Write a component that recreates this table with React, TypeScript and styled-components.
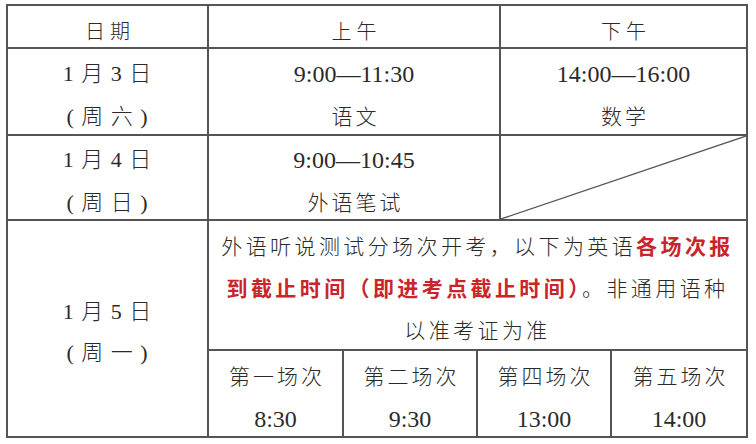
import React from "react";
import styled, { createGlobalStyle } from "styled-components";

const GlobalStyle = createGlobalStyle`
  html, body {
    margin: 0;
    padding: 0;
    background: #ffffff;
  }
`;

const Page = styled.div`
  width: 756px;
  height: 444px;
  padding: 4px 0 0 6px;
  box-sizing: border-box;
  font-family: "Liberation Serif", "Noto Sans CJK SC", serif;
  color: #2a2a2a;
`;

const Table = styled.table`
  width: 740px;
  border-collapse: collapse;
  table-layout: fixed;
  border: 2px solid #555;
`;

const Row = styled.tr<{ $h: number }>`
  height: ${(p) => p.$h}px;
`;

const Cell = styled.td<{ $diag?: boolean; $pad?: number }>`
  border: 2px solid #555;
  padding: ${(p) => p.$pad ?? 8}px 0 0 0;
  text-align: center;
  vertical-align: middle;
  position: ${(p) => (p.$diag ? "relative" : "static")};
  font-weight: 300;
`;

const Stack = styled.div<{ $gap: number }>`
  display: flex;
  flex-direction: column;
  align-items: center;
  gap: ${(p) => p.$gap}px;
`;

const HeadText = styled.div`
  font-size: 20px;
  line-height: 24px;
  letter-spacing: 5px;
  padding-left: 5px;
`;

const DateText = styled.div`
  font-size: 22px;
  line-height: 24px;
  letter-spacing: 1px;
  white-space: pre;
`;

const Time = styled.div`
  font-size: 24px;
  line-height: 24px;
  font-weight: 400;
`;

const Subject = styled.div`
  font-size: 21px;
  line-height: 24px;
  letter-spacing: 3px;
  padding-left: 3px;
`;

const NoticeLine = styled.div`
  font-size: 21px;
  line-height: 24px;
  letter-spacing: 3.4px;
  white-space: nowrap;
`;

const Red = styled.span`
  color: #c9252b;
  font-weight: 700;
`;

const Diagonal = styled.svg`
  position: absolute;
  inset: 0;
  width: 100%;
  height: 100%;
`;

const sessions = [
  { name: "第一场次", time: "8:30", span: 1 },
  { name: "第二场次", time: "9:30", span: 1 },
  { name: "第四场次", time: "13:00", span: 2 },
  { name: "第五场次", time: "14:00", span: 1 },
];

export default function App() {
  return (
    <>
      <GlobalStyle />
      <Page>
        <Table>
          <colgroup>
            <col style={{ width: 201 }} />
            <col style={{ width: 135 }} />
            <col style={{ width: 134 }} />
            <col style={{ width: 23 }} />
            <col style={{ width: 111 }} />
            <col style={{ width: 136 }} />
          </colgroup>
          <tbody>
            <Row $h={43}>
              <Cell $pad={10}>
                <HeadText>日期</HeadText>
              </Cell>
              <Cell colSpan={3} $pad={10}>
                <HeadText>上午</HeadText>
              </Cell>
              <Cell colSpan={2} $pad={10}>
                <HeadText>下午</HeadText>
              </Cell>
            </Row>
            <Row $h={87}>
              <Cell>
                <Stack $gap={19}>
                  <DateText>{"1 月 3 日"}</DateText>
                  <DateText>{"( 周 六 )"}</DateText>
                </Stack>
              </Cell>
              <Cell colSpan={3}>
                <Stack $gap={19}>
                  <Time>9:00—11:30</Time>
                  <Subject>语文</Subject>
                </Stack>
              </Cell>
              <Cell colSpan={2}>
                <Stack $gap={19}>
                  <Time>14:00—16:00</Time>
                  <Subject>数学</Subject>
                </Stack>
              </Cell>
            </Row>
            <Row $h={85}>
              <Cell>
                <Stack $gap={19}>
                  <DateText>{"1 月 4 日"}</DateText>
                  <DateText>{"( 周 日 )"}</DateText>
                </Stack>
              </Cell>
              <Cell colSpan={3}>
                <Stack $gap={19}>
                  <Time>9:00—10:45</Time>
                  <Subject>外语笔试</Subject>
                </Stack>
              </Cell>
              <Cell colSpan={2} $diag>
                <Diagonal viewBox="0 0 100 100" preserveAspectRatio="none">
                  <line
                    x1="0"
                    y1="100"
                    x2="100"
                    y2="0"
                    stroke="#555"
                    strokeWidth="1.3"
                    vectorEffect="non-scaling-stroke"
                  />
                </Diagonal>
              </Cell>
            </Row>
            <Row $h={130}>
              <Cell rowSpan={2}>
                <Stack $gap={17}>
                  <DateText>{"1 月 5 日"}</DateText>
                  <DateText>{"( 周 一 )"}</DateText>
                </Stack>
              </Cell>
              <Cell colSpan={5}>
                <Stack $gap={18}>
                  <NoticeLine>
                    外语听说测试分场次开考，以下为英语<Red>各场次报</Red>
                  </NoticeLine>
                  <NoticeLine>
                    <Red>到截止时间（即进考点截止时间）</Red>。非通用语种
                  </NoticeLine>
                  <NoticeLine>以准考证为准</NoticeLine>
                </Stack>
              </Cell>
            </Row>
            <Row $h={87}>
              {sessions.map((s) => (
                <Cell key={s.name} colSpan={s.span}>
                  <Stack $gap={18}>
                    <Subject>{s.name}</Subject>
                    <Time>{s.time}</Time>
                  </Stack>
                </Cell>
              ))}
            </Row>
          </tbody>
        </Table>
      </Page>
    </>
  );
}
